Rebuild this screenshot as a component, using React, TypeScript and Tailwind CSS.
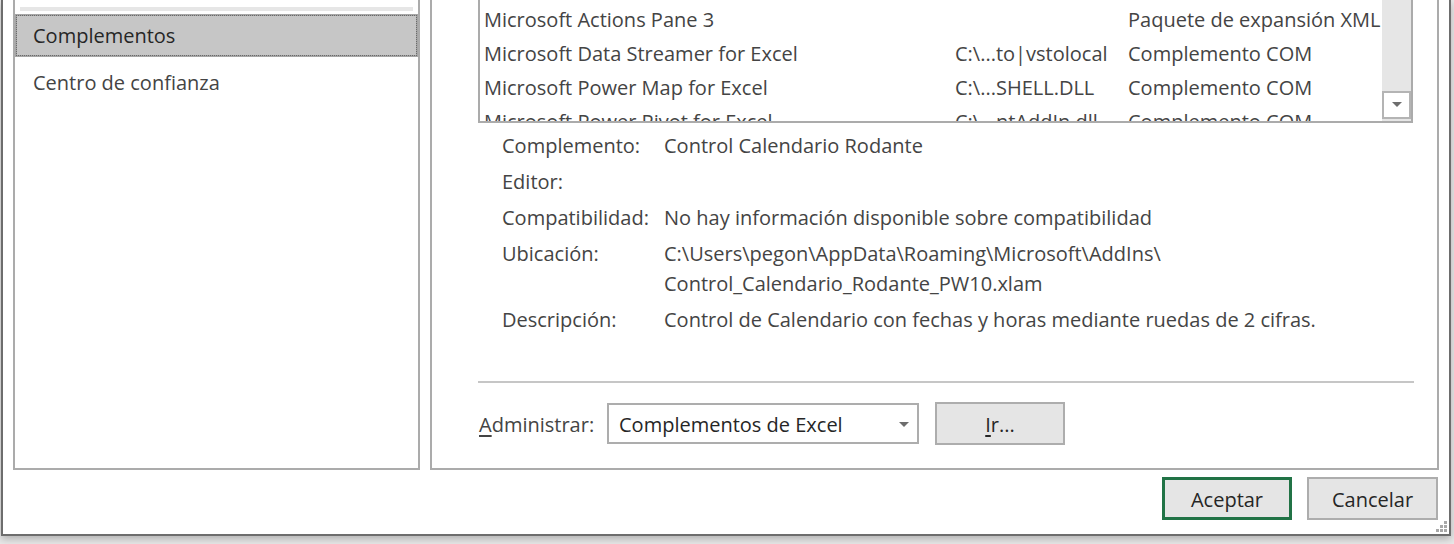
import React from "react";

const rows = [
  { name: "Microsoft Actions Pane 3", path: "", type: "Paquete de expansión XML" },
  { name: "Microsoft Data Streamer for Excel", path: "C:\\...to|vstolocal", type: "Complemento COM" },
  { name: "Microsoft Power Map for Excel", path: "C:\\...SHELL.DLL", type: "Complemento COM" },
  { name: "Microsoft Power Pivot for Excel", path: "C:\\...ntAddIn.dll", type: "Complemento COM" },
];

const details = [
  { label: "Complemento:", value: ["Control Calendario Rodante"] },
  { label: "Editor:", value: [""] },
  { label: "Compatibilidad:", value: ["No hay información disponible sobre compatibilidad"] },
  {
    label: "Ubicación:",
    value: ["C:\\Users\\pegon\\AppData\\Roaming\\Microsoft\\AddIns\\", "Control_Calendario_Rodante_PW10.xlam"],
  },
  { label: "Descripción:", value: ["Control de Calendario con fechas y horas mediante ruedas de 2 cifras."] },
];

const Triangle = () => (
  <svg width="10" height="6" viewBox="0 0 10 6">
    <path d="M0 0 L10 0 L5 5 Z" fill="#6d6d6d" />
  </svg>
);

export default function App() {
  return (
    <div
      className="w-[1454px] h-[544px] bg-[#e9e9e9] overflow-hidden text-[20px] text-[#444444]"
      style={{ fontFamily: '"Segoe UI", "Open Sans", "Noto Sans", sans-serif' }}
    >
      <div className="relative ml-[1px] w-[1450px] h-[536px] bg-white border-x-2 border-b-2 border-[#6d6d6d] flex flex-col px-[10px] shadow-[0_3px_8px_rgba(0,0,0,0.25)]">
        {/* panels */}
        <div className="flex gap-[10px] h-[470px]">
          {/* left nav */}
          <div className="w-[407px] border-x-2 border-b-2 border-[#ababab] pt-[7px]">
            <div className="mx-[5px] h-[4px] bg-[#e6e6e6]" />
            <div className="mt-[3px] h-[43px] bg-[#c6c6c6] border-2 border-[#a6a6a6] outline-1 outline-dotted outline-[#6a6a6a] -outline-offset-2 flex items-center pl-[16px] text-[#262626]">
              Complementos
            </div>
            <div className="h-[50px] flex items-center pl-[18px] pt-[1px]">Centro de confianza</div>
          </div>

          {/* right content */}
          <div className="flex-1 border-x-2 border-b-2 border-[#ababab] flex flex-col pb-[23px]">
            {/* list */}
            <div className="ml-[46px] mr-[24px] h-[123px] border-x-2 border-b-2 border-[#ababab] flex">
              <div className="flex-1 overflow-hidden pt-[3px]">
                {rows.map((r) => (
                  <div key={r.name} className="h-[34px] flex items-center whitespace-nowrap">
                    <div className="w-[475px] pl-[4px]">{r.name}</div>
                    <div className="w-[173px]">{r.path}</div>
                    <div>{r.type}</div>
                  </div>
                ))}
              </div>
              <div className="w-[29px] bg-[#e6e6e6] flex flex-col justify-end pb-[2px]">
                <div className="h-[28px] border-2 border-[#b4b4b4] bg-white flex items-center justify-center">
                  <Triangle />
                </div>
              </div>
            </div>

            {/* details */}
            <div className="mt-[8px] pl-[70px] flex flex-col gap-[6px] leading-[30px]">
              {details.map((d) => (
                <div key={d.label} className="flex">
                  <div className="w-[162px]">{d.label}</div>
                  <div>
                    {d.value.map((v, i) => (
                      <div key={i} className="h-[30px]">
                        {v}
                      </div>
                    ))}
                  </div>
                </div>
              ))}
            </div>

            {/* manage */}
            <div className="mt-auto ml-[46px] mr-[23px] h-[2px] bg-[#c6c6c6]" />
            <div className="mt-[19px] ml-[46px] h-[43px] flex items-center">
              <span className="w-[129px] pl-[1px] pt-[3px]">
                <span className="underline underline-offset-[3px]">A</span>dministrar:
              </span>
              <div className="w-[312px] h-[41px] border-2 border-[#adadad] bg-white flex items-center justify-between pl-[10px] pr-[8px] pt-[2px] text-[#262626]">
                <span>Complementos de Excel</span>
                <Triangle />
              </div>
              <button className="ml-[16px] w-[130px] h-[43px] border-2 border-[#adadad] bg-[#e5e5e5] pt-[2px] text-[#262626]">
                <span className="underline underline-offset-[3px]">I</span>r...
              </button>
            </div>
          </div>
        </div>

        {/* footer */}
        <div className="flex justify-end gap-[15px] pt-[7px] pr-[1px]">
          <button className="w-[130px] h-[43px] border-[3px] border-[#217346] bg-[#e5e5e5] pt-[2px] text-[#262626]">
            Aceptar
          </button>
          <button className="w-[131px] h-[43px] border-2 border-[#adadad] bg-[#e5e5e5] pt-[2px] text-[#262626]">
            Cancelar
          </button>
        </div>

        {/* resize grip */}
        <svg className="absolute right-[2px] bottom-[2px]" width="12" height="12" viewBox="0 0 12 12">
          <g fill="#a8a8a8">
            <rect x="9" y="1" width="3" height="3" />
            <rect x="5" y="5" width="3" height="3" />
            <rect x="9" y="5" width="3" height="3" />
            <rect x="1" y="9" width="3" height="3" />
            <rect x="5" y="9" width="3" height="3" />
            <rect x="9" y="9" width="3" height="3" />
          </g>
        </svg>
      </div>
    </div>
  );
}
